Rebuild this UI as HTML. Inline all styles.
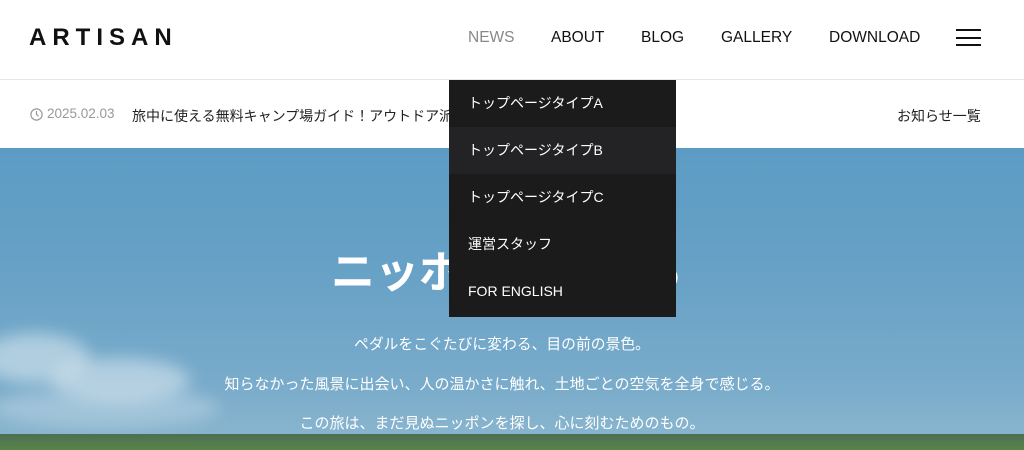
<!DOCTYPE html>
<html><head><meta charset="utf-8"><style>
*{margin:0;padding:0;box-sizing:border-box}
body{width:1024px;height:450px;overflow:hidden;position:relative;font-family:"Liberation Sans","Noto Sans CJK JP",sans-serif;background:#fff}
.hdr{position:absolute;top:0;left:0;width:1024px;height:80px;background:#fff;border-bottom:1px solid #e6e6e6}
.logo{position:absolute;left:29px;top:24px;font-size:24px;font-weight:bold;letter-spacing:6px;color:#111}
.nav a{position:absolute;top:29px;font-size:15.5px;color:#111;text-decoration:none}
.burger{position:absolute;left:956px;top:29px;width:25px;height:17px;border-top:2px solid #111;border-bottom:2px solid #111}
.burger:after{content:"";position:absolute;left:0;top:5.5px;width:25px;height:2px;background:#111}
.news{position:absolute;top:81px;left:0;width:1024px;height:67px;background:#fff;font-size:14px}
.hero{position:absolute;top:148px;left:0;width:1024px;height:302px;background:linear-gradient(180deg,#5c9cc4 0%,#67a1c6 40%,#7aaccb 80%,#86b3cd 92%);overflow:hidden}
.ground{position:absolute;left:0;top:286px;width:1024px;height:20px;background:linear-gradient(180deg,#4d6e55,#5c8a43)}
.cloud{position:absolute;background:rgba(225,236,243,.55);border-radius:50%;filter:blur(8px)}
.t{position:absolute;left:-10px;width:1024px;text-align:center;color:#fff}
.dd{position:absolute;left:449px;top:80px;width:227px;height:237px;background:#1b1b1b}
.dd div{height:47px;line-height:47px;padding-left:19px;color:#fff;font-size:14px}
</style></head><body>
<div class="hdr">
<div class="logo">ARTISAN</div>
<div class="nav">
<a style="left:468px;color:#888">NEWS</a>
<a style="left:551px">ABOUT</a>
<a style="left:641px">BLOG</a>
<a style="left:721px">GALLERY</a>
<a style="left:829px">DOWNLOAD</a>
</div>
<div class="burger"></div>
</div>
<div class="news">
<svg style="position:absolute;left:30px;top:27px" width="13" height="13" viewBox="0 0 13 13"><circle cx="6.5" cy="6.5" r="5.6" fill="none" stroke="#999" stroke-width="1.2"/><path d="M6.5 3v3.6l2.2 1.6" fill="none" stroke="#999" stroke-width="1.2"/></svg>
<span style="position:absolute;left:47px;top:25px;color:#999;font-size:13.5px">2025.02.03</span>
<span style="position:absolute;left:132px;top:25px;color:#222">旅中に使える無料キャンプ場ガイド！アウトドア派必</span>
<span style="position:absolute;left:897px;top:25px;color:#222">お知らせ一覧</span>
</div>
<div class="hero">
<div class="cloud" style="left:-20px;top:185px;width:110px;height:50px"></div>
<div class="cloud" style="left:50px;top:210px;width:140px;height:45px"></div>
<div class="cloud" style="left:-10px;top:240px;width:230px;height:40px;background:rgba(200,220,232,.45)"></div>
<div class="ground"></div>
<div class="t" style="top:88px;font-size:44px;font-weight:bold;left:-5px">ニッポンを旅する</div>
<div class="t" style="top:185px;font-size:14.8px">ペダルをこぐたびに変わる、目の前の景色。</div>
<div class="t" style="top:225px;font-size:15px">知らなかった風景に出会い、人の温かさに触れ、土地ごとの空気を全身で感じる。</div>
<div class="t" style="top:264px;font-size:15px">この旅は、まだ見ぬニッポンを探し、心に刻むためのもの。</div>
</div>
<div class="dd">
<div>トップページタイプA</div>
<div style="background:#232325">トップページタイプB</div>
<div>トップページタイプC</div>
<div>運営スタッフ</div>
<div>FOR ENGLISH</div>
</div>
</body></html>
